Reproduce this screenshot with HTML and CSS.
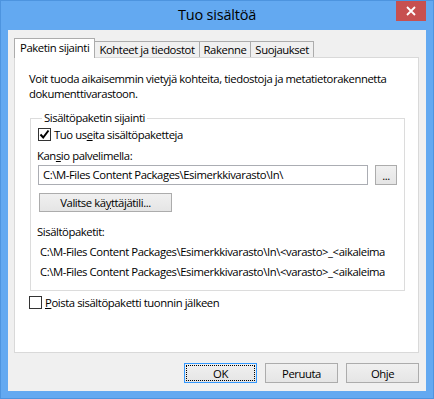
FILE: index.html
```html
<!DOCTYPE html>
<html lang="fi">
<head>
<meta charset="utf-8">
<title>Tuo sisältöä</title>
<link rel="stylesheet" href="styles.css">
</head>
<body>
<div class="window">
  <div class="titlebar">
    <div></div>
    <div class="title">Tuo sisältöä</div>
    <div class="close"><svg width="10" height="10" viewBox="0 0 10 10"><path d="M1 1 L9 9 M9 1 L1 9" stroke="#fff" stroke-width="1.8"/></svg></div>
  </div>
  <div class="client">
    <div class="tabs">
      <div class="tab active">Paketin sijainti</div>
      <div class="tab">Kohteet ja tiedostot</div>
      <div class="tab">Rakenne</div>
      <div class="tab">Suojaukset</div>
    </div>
    <div class="panel">
      <p class="desc">Voit tuoda aikaisemmin vietyjä kohteita, tiedostoja ja metatietorakennetta dokumenttivarastoon.</p>
      <fieldset class="group">
        <legend>Sisältöpaketin sijainti</legend>
        <label class="check">
          <span class="box"><svg width="11" height="11" viewBox="0 0 11 11"><path d="M1.5 5.5 L4.2 8.5 L9.5 1.5" fill="none" stroke="#000" stroke-width="2"/></svg></span>
          <span>Tuo us<u>e</u>ita sisältöpaketteja</span>
        </label>
        <div class="lbl">Kan<u>s</u>io palvelimella:</div>
        <div class="pathrow">
          <div class="input">C:\M-Files Content Packages\Esimerkkivarasto\In\</div>
          <div class="btn small">...</div>
        </div>
        <div class="btn account">Valitse kä<u>y</u>ttäjätili...</div>
        <div class="lbl pk">Sisältöpaketit:</div>
        <div class="pkline">C:\M-Files Content Packages\Esimerkkivarasto\In\&lt;varasto&gt;_&lt;aikaleima</div>
        <div class="pkline">C:\M-Files Content Packages\Esimerkkivarasto\In\&lt;varasto&gt;_&lt;aikaleima</div>
      </fieldset>
      <label class="check bottom">
        <span class="box"></span>
        <span><u>P</u>oista sisältöpaketti tuonnin jälkeen</span>
      </label>
    </div>
    <div class="buttons">
      <div class="btn main default">OK</div>
      <div class="btn main">Peruuta</div>
      <div class="btn main">Ohje</div>
    </div>
  </div>
</div>
</body>
</html>
```

FILE: styles.css
```css
html, body {
  margin: 0;
  padding: 0;
  background: #fff;
}
body {
  font-family: "Open Sans", "Noto Sans", sans-serif;
  font-size: 11.3px;
  letter-spacing: -0.42px;
  color: #000;
}
.window {
  width: 434px;
  height: 399px;
  box-sizing: border-box;
  background: #63a9f1;
  border: 1px solid #4d94df;
  display: flex;
  flex-direction: column;
}
.titlebar {
  height: 29px;
  display: grid;
  grid-template-columns: 1fr auto 1fr;
  flex: none;
}
.title {
  font-size: 14.5px;
  letter-spacing: -0.2px;
  line-height: 28px;
  color: #000;
}
.close {
  justify-self: end;
  width: 30px;
  height: 20px;
  margin-right: 7px;
  background: #c75050;
  display: flex;
  align-items: center;
  justify-content: center;
}
.close svg { display: block; }
.client {
  flex: 1;
  margin: 0 7px 7px 7px;
  background: #f0f0f0;
  padding: 8px 7px 0 6px;
  display: flex;
  flex-direction: column;
}
.tabs {
  display: flex;
  align-items: flex-end;
  height: 19px;
  position: relative;
  z-index: 1;
}
.tab {
  height: 15px;
  line-height: 15px;
  padding: 0 4px;
  border: 1px solid #acacac;
  border-bottom: none;
  background: #f0f0f0;
  margin-left: -1px;
  white-space: nowrap;
}
.tab.active {
  height: 19px;
  line-height: 18px;
  padding: 0 5px;
  background: #fff;
  margin-left: 0;
  margin-bottom: -1px;
  margin-right: 0;
}
.tab.active + .tab { margin-left: -1px; }
.panel {
  height: 294px;
  background: #fff;
  border: 1px solid #d9d9d9;
  padding: 0 13px 0 14px;
  display: flex;
  flex-direction: column;
}
.desc {
  margin: 13px 0 0 0;
  line-height: 15px;
}
.group {
  margin: 10px 0 0 1px;
  padding: 0 7px 0 7px;
  border: 1px solid #dcdcdc;
  height: 180px;
  box-sizing: border-box;
  display: flex;
  flex-direction: column;
  min-width: 0;
}
.group legend {
  padding: 0 2px;
  margin-left: 4px;
  line-height: 14px;
}
.check {
  display: flex;
  align-items: center;
  gap: 3px;
  height: 17px;
  margin-top: 1px;
}
.box {
  width: 11px;
  height: 11px;
  border: 1px solid #333;
  background: #fff;
  display: flex;
  align-items: center;
  justify-content: center;
  flex: none;
}
.box svg { display: block; }
.lbl {
  margin-top: 5px;
  line-height: 15px;
  margin-left: -1px;
}
.pathrow {
  display: flex;
  gap: 7px;
  margin-top: 2px;
}
.input {
  height: 18px;
  line-height: 18px;
  border: 1px solid #abadb3;
  padding: 0 4px;
  box-sizing: content-box;
  white-space: nowrap;
  overflow: hidden;
}
.pathrow .input { width: 320px; }
.btn {
  border: 1px solid #acacac;
  background: linear-gradient(#f0f0f0, #e5e5e5);
  display: flex;
  align-items: center;
  justify-content: center;
  white-space: nowrap;
}
.btn.small {
  width: 20px;
  height: 18px;
}
.btn.account {
  width: 131px;
  height: 17px;
  margin-top: 8px;
  margin-left: 1px;
}
.pk { margin-top: 12px; }
.pkline {
  margin-top: 5px;
  margin-left: 2px;
  line-height: 15px;
  white-space: nowrap;
}
.check.bottom {
  margin-top: 3px;
}
.buttons {
  display: flex;
  justify-content: flex-end;
  gap: 8px;
  margin-top: 10px;
}
.btn.main {
  width: 71px;
  height: 18px;
}
.btn.default {
  border-color: #3399ff;
  outline: 1px dotted #000;
  outline-offset: -3px;
}
```
